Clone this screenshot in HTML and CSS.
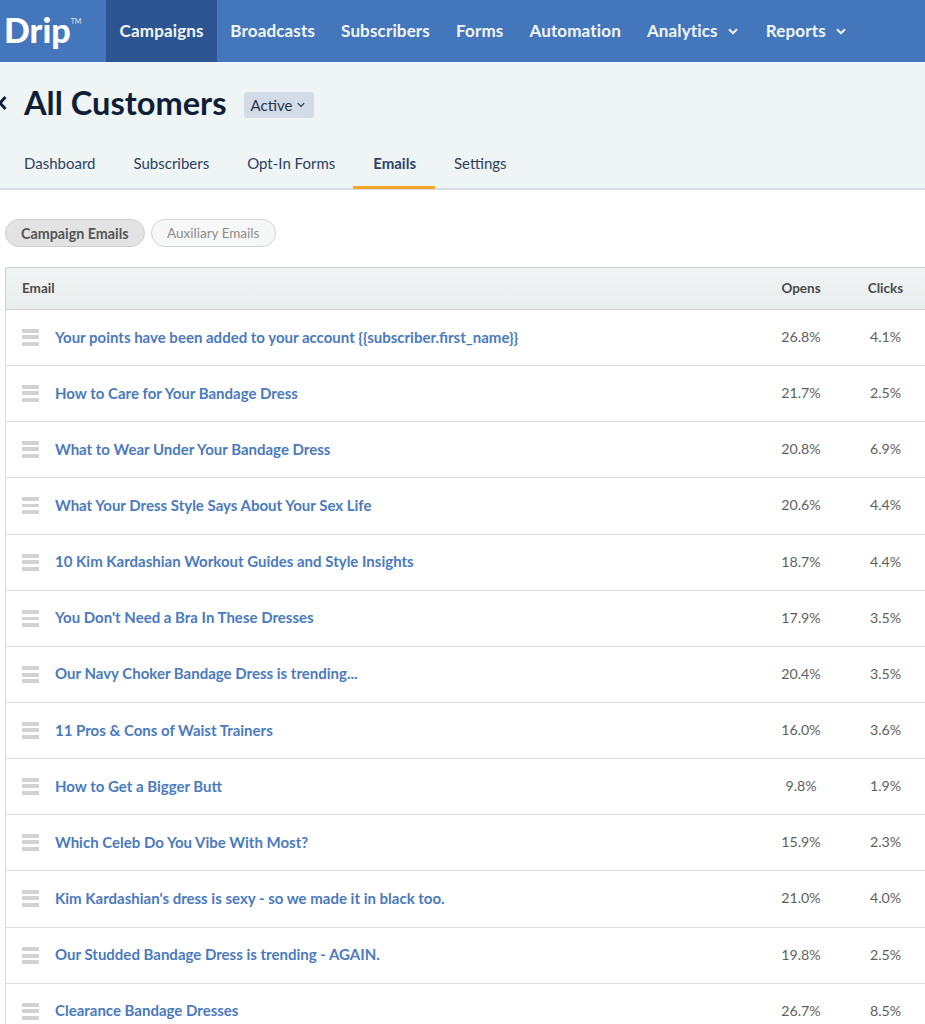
FILE: index.html
```html
<!DOCTYPE html>
<html lang="en">
<head>
    <meta charset="UTF-8">
    <meta name="viewport" content="width=device-width, initial-scale=1.0">
    <title>All Customers - Emails</title>
    <link rel="stylesheet" href="styles.css">
</head>
<body>
    <nav class="topbar">
        <div class="logo"><span class="logo-word">Drip</span><span class="logo-tm">TM</span></div>
        <a class="nav-item active">Campaigns</a>
        <a class="nav-item">Broadcasts</a>
        <a class="nav-item">Subscribers</a>
        <a class="nav-item">Forms</a>
        <a class="nav-item">Automation</a>
        <a class="nav-item">Analytics
            <svg class="nav-caret" viewBox="0 0 10 7"><path d="M1 1.2 5 5.2 9 1.2"/></svg>
        </a>
        <a class="nav-item">Reports
            <svg class="nav-caret" viewBox="0 0 10 7"><path d="M1 1.2 5 5.2 9 1.2"/></svg>
        </a>
    </nav>

    <header class="page-head">
        <div class="title-row">
            <svg class="back" viewBox="0 0 8 14"><path d="M7 1 1.5 7 7 13"/></svg>
            <h1>All Customers</h1>
            <button class="status">Active
                <svg class="status-caret" viewBox="0 0 10 7"><path d="M1 1.2 5 5.2 9 1.2"/></svg>
            </button>
        </div>
        <div class="tabs">
            <a class="tab">Dashboard</a>
            <a class="tab">Subscribers</a>
            <a class="tab">Opt-In Forms</a>
            <a class="tab current">Emails</a>
            <a class="tab">Settings</a>
        </div>
    </header>

    <div class="pills">
        <button class="pill on">Campaign Emails</button>
        <button class="pill">Auxiliary Emails</button>
    </div>

    <table class="emails">
        <thead>
            <tr>
                <th class="col-email">Email</th>
                <th class="col-num">Opens</th>
                <th class="col-num col-clicks">Clicks</th>
            </tr>
        </thead>
        <tbody>
            <tr><td><span class="handle"></span><a>Your points have been added to your account {{subscriber.first_name}}</a></td><td class="num">26.8%</td><td class="num">4.1%</td></tr>
            <tr><td><span class="handle"></span><a>How to Care for Your Bandage Dress</a></td><td class="num">21.7%</td><td class="num">2.5%</td></tr>
            <tr><td><span class="handle"></span><a>What to Wear Under Your Bandage Dress</a></td><td class="num">20.8%</td><td class="num">6.9%</td></tr>
            <tr><td><span class="handle"></span><a>What Your Dress Style Says About Your Sex Life</a></td><td class="num">20.6%</td><td class="num">4.4%</td></tr>
            <tr><td><span class="handle"></span><a>10 Kim Kardashian Workout Guides and Style Insights</a></td><td class="num">18.7%</td><td class="num">4.4%</td></tr>
            <tr><td><span class="handle"></span><a>You Don't Need a Bra In These Dresses</a></td><td class="num">17.9%</td><td class="num">3.5%</td></tr>
            <tr><td><span class="handle"></span><a>Our Navy Choker Bandage Dress is trending...</a></td><td class="num">20.4%</td><td class="num">3.5%</td></tr>
            <tr><td><span class="handle"></span><a>11 Pros &amp; Cons of Waist Trainers</a></td><td class="num">16.0%</td><td class="num">3.6%</td></tr>
            <tr><td><span class="handle"></span><a>How to Get a Bigger Butt</a></td><td class="num">9.8%</td><td class="num">1.9%</td></tr>
            <tr><td><span class="handle"></span><a>Which Celeb Do You Vibe With Most?</a></td><td class="num">15.9%</td><td class="num">2.3%</td></tr>
            <tr><td><span class="handle"></span><a>Kim Kardashian's dress is sexy - so we made it in black too.</a></td><td class="num">21.0%</td><td class="num">4.0%</td></tr>
            <tr><td><span class="handle"></span><a>Our Studded Bandage Dress is trending - AGAIN.</a></td><td class="num">19.8%</td><td class="num">2.5%</td></tr>
            <tr><td><span class="handle"></span><a>Clearance Bandage Dresses</a></td><td class="num">26.7%</td><td class="num">8.5%</td></tr>
        </tbody>
    </table>
</body>
</html>
```

FILE: styles.css
```css
html, body {
    height: 100%;
    overflow: hidden;
}

body {
    margin: 0;
    background-color: #fff;
    font-family: "Lato", "Open Sans", sans-serif;
    color: #555;
}

.topbar {
    display: flex;
    align-items: stretch;
    height: 62px;
    background-color: #4476bb;
    color: #fff;
}

.logo {
    display: flex;
    width: 106px;
    padding-left: 4px;
    box-sizing: border-box;
    color: #fff;
}

.logo-word {
    font-size: 34px;
    font-weight: 900;
    line-height: 60px;
}

.logo-tm {
    font-size: 7px;
    line-height: 8px;
    margin-top: 17px;
    opacity: 0.8;
}

.nav-item {
    display: flex;
    align-items: center;
    gap: 9px;
    padding: 0 13px 2px;
    font-size: 17px;
    font-weight: 700;
    letter-spacing: 0.15px;
    color: #f2f6fb;
}

.nav-item.active {
    padding: 0 13.6px 2px;
    background-color: #2c5592;
}

.nav-caret {
    width: 10px;
    height: 7px;
    margin: 2px 2px 0 1px;
    fill: none;
    stroke: #f2f6fb;
    stroke-width: 2;
}

.page-head {
    height: 128px;
    box-sizing: border-box;
    background-color: #eff4f5;
    border-bottom: 2px solid #d6dee4;
}

.title-row {
    position: relative;
    display: flex;
    align-items: center;
    height: 82px;
    padding-left: 24px;
}

.back {
    position: absolute;
    left: -2px;
    top: 34px;
    width: 9px;
    height: 14px;
    fill: none;
    stroke: #0f1f38;
    stroke-width: 3;
}

h1 {
    margin: 0 0 2px;
    font-size: 32.6px;
    font-weight: 700;
    color: #0f1f38;
}

.status {
    display: flex;
    align-items: center;
    gap: 5px;
    width: 70px;
    height: 26px;
    margin: 3px 0 0 17px;
    padding: 0 0 0 7px;
    border: none;
    border-radius: 3px;
    background-color: #d3dce6;
    font-family: inherit;
    font-size: 15px;
    color: #26364d;
}

.status-caret {
    width: 8px;
    height: 6px;
    fill: none;
    stroke: #26364d;
    stroke-width: 1.6;
}

.tabs {
    display: flex;
    height: 44px;
    padding-left: 24px;
    gap: 38px;
}

.tab {
    position: relative;
    display: flex;
    align-items: center;
    height: 38px;
    font-size: 15px;
    color: #2c4060;
}

.tab.current {
    font-weight: 700;
    color: #2c4468;
}

.tab.current::after {
    content: "";
    position: absolute;
    left: -20px;
    right: -19px;
    top: 42px;
    height: 3px;
    background-color: #f5a623;
}

.pills {
    display: flex;
    gap: 6px;
    padding: 29px 0 20px 5px;
}

.pill {
    height: 28px;
    padding: 0 15.5px;
    border: 1px solid #d4d4d4;
    border-radius: 14px;
    background-color: #f6f7f7;
    font-family: inherit;
    font-size: 13.5px;
    color: #8b8b8b;
}

.pill.on {
    padding: 0 15px;
    background-color: #e3e3e3;
    border-color: #cfcfcf;
    font-size: 14.3px;
    font-weight: 700;
    color: #555;
}

.emails {
    width: 925px;
    margin-left: 5px;
    table-layout: fixed;
    border-collapse: separate;
    border-spacing: 0;
    font-size: 15px;
}

.emails th {
    box-sizing: border-box;
    height: 43px;
    padding: 0 0 2px;
    border-top: 1px solid #cfcfcf;
    border-bottom: 1px solid #cfcfcf;
    background: linear-gradient(#f0f4f5, #e9edee);
    font-size: 13.5px;
    font-weight: 700;
    color: #4a4a4a;
    text-align: center;
}

.emails th.col-email {
    padding-left: 16px;
    border-left: 1px solid #cfcfcf;
    border-top-left-radius: 3px;
    text-align: left;
}

.col-num {
    width: 80px;
}

.col-clicks {
    width: 89px;
}

.emails td {
    box-sizing: border-box;
    height: 56.15px;
    padding: 0 0 2px;
    border-bottom: 1px solid #dedede;
    color: #5f5f5f;
}

.emails td:first-child {
    display: flex;
    align-items: center;
    gap: 16px;
    padding: 0 0 0 16px;
    border-left: 1px solid #dedede;
    font-weight: 700;
    color: #4a7abf;
}

.emails td a {
    margin-top: -2px;
}

.emails .num {
    font-size: 14.2px;
    text-align: center;
}

.handle {
    width: 17px;
    height: 17px;
    background: repeating-linear-gradient(#d2d2d2 0, #d2d2d2 4px, #fff 4px, #fff 6.5px);
}
```
